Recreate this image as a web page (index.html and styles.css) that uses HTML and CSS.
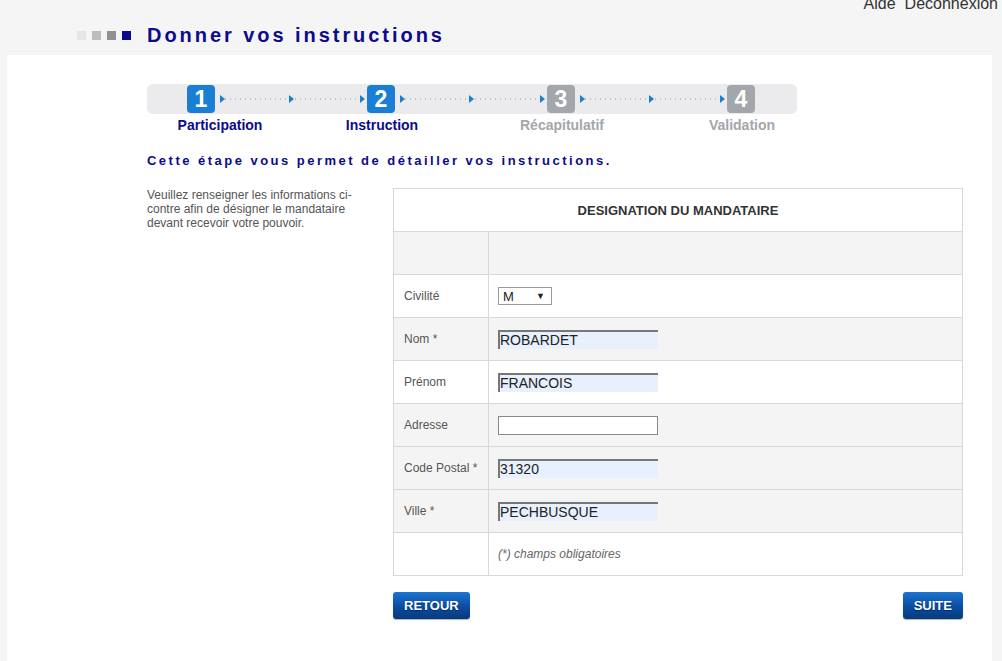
FILE: index.html
```html
<!DOCTYPE html>
<html lang="fr">
<head>
<meta charset="utf-8">
<title>Donner vos instructions</title>
<link rel="stylesheet" href="styles.css">
</head>
<body>
<div class="top">
  <div class="toplinks"><span>Aide</span><span>Déconnexion</span></div>
  <div class="titlebar">
    <div class="squares"><i class="sq s1"></i><i class="sq s2"></i><i class="sq s3"></i><i class="sq s4"></i></div>
    <h1 class="title">Donner vos instructions</h1>
  </div>
</div>
<div class="panel">
  <div class="stepper">
    <div class="step on">1</div>
    <svg class="conn" width="152" height="10" viewBox="0 0 152 10"><line x1="10" y1="5" x2="72" y2="5" stroke="#8a9bb0" stroke-width="1" stroke-dasharray="1 4"/><line x1="80" y1="5" x2="142" y2="5" stroke="#8a9bb0" stroke-width="1" stroke-dasharray="1 4"/><path d="M5 1 L10 5 L5 9Z M74 1 L79 5 L74 9Z M145 1 L150 5 L145 9Z" fill="#1a7fd4"/></svg>
    <div class="step on">2</div>
    <svg class="conn" width="152" height="10" viewBox="0 0 152 10"><line x1="10" y1="5" x2="72" y2="5" stroke="#8a9bb0" stroke-width="1" stroke-dasharray="1 4"/><line x1="80" y1="5" x2="142" y2="5" stroke="#8a9bb0" stroke-width="1" stroke-dasharray="1 4"/><path d="M5 1 L10 5 L5 9Z M74 1 L79 5 L74 9Z M145 1 L150 5 L145 9Z" fill="#1a7fd4"/></svg>
    <div class="step off">3</div>
    <svg class="conn" width="152" height="10" viewBox="0 0 152 10"><line x1="10" y1="5" x2="72" y2="5" stroke="#8a9bb0" stroke-width="1" stroke-dasharray="1 4"/><line x1="80" y1="5" x2="142" y2="5" stroke="#8a9bb0" stroke-width="1" stroke-dasharray="1 4"/><path d="M5 1 L10 5 L5 9Z M74 1 L79 5 L74 9Z M145 1 L150 5 L145 9Z" fill="#1a7fd4"/></svg>
    <div class="step off">4</div>
  </div>
  <div class="steplabels">
    <span class="lbl on first">Participation</span>
    <span class="lbl on">Instruction</span>
    <span class="lbl off">Récapitulatif</span>
    <span class="lbl off">Validation</span>
  </div>
  <h2 class="subtitle">Cette étape vous permet de détailler vos instructions.</h2>
  <div class="content">
    <p class="intro">Veuillez renseigner les informations ci-contre afin de désigner le mandataire devant recevoir votre pouvoir.</p>
    <div class="formcol">
      <table class="form">
        <tr class="head"><th colspan="2">DESIGNATION DU MANDATAIRE</th></tr>
        <tr class="g"><td class="lab"></td><td></td></tr>
        <tr><td class="lab">Civilité</td><td><span class="select">M<span class="caret">▼</span></span></td></tr>
        <tr class="g"><td class="lab">Nom *</td><td><span class="input fill">ROBARDET</span></td></tr>
        <tr><td class="lab">Prénom</td><td><span class="input fill">FRANCOIS</span></td></tr>
        <tr class="g"><td class="lab">Adresse</td><td><span class="input empty"></span></td></tr>
        <tr class="g"><td class="lab">Code Postal *</td><td><span class="input fill">31320</span></td></tr>
        <tr class="g"><td class="lab">Ville *</td><td><span class="input fill">PECHBUSQUE</span></td></tr>
        <tr><td class="lab"></td><td class="note">(*) champs obligatoires</td></tr>
      </table>
      <div class="buttons">
        <span class="btn">RETOUR</span>
        <span class="btn">SUITE</span>
      </div>
    </div>
  </div>
</div>
</body>
</html>
```
FILE: styles.css
```css
html, body {
  margin: 0;
  padding: 0;
}
body {
  background: #f5f5f6;
  font-family: "Liberation Sans", Arial, sans-serif;
  width: 1002px;
  height: 661px;
  overflow: hidden;
}
.top {
  height: 55px;
  position: relative;
}
.toplinks {
  position: absolute;
  right: 4px;
  top: -5px;
  display: flex;
  gap: 9px;
  font-size: 16px;
  color: #333;
}
.titlebar {
  display: flex;
  align-items: center;
  padding-left: 77px;
  padding-top: 24px;
}
.squares {
  display: flex;
  gap: 6px;
  margin-right: 16px;
}
.sq {
  display: block;
  width: 9px;
  height: 9px;
}
.s1 { background: #e6e6e8; }
.s2 { background: #bdbdbf; }
.s3 { background: #909092; }
.s4 { background: #0b0b8a; }
.title {
  margin: 0;
  font-size: 20px;
  font-weight: bold;
  letter-spacing: 2.95px;
  color: #0b0b8c;
  line-height: 22px;
}
.panel {
  background: #fff;
  margin: 0 10px 0 7px;
  height: 606px;
  padding-left: 140px;
  padding-top: 29px;
  box-sizing: border-box;
}
.stepper {
  width: 650px;
  height: 30px;
  background: #ebebed;
  border-radius: 6px;
  display: flex;
  align-items: center;
  padding-left: 40px;
  box-sizing: border-box;
}
.step {
  width: 28px;
  height: 28px;
  border-radius: 4px;
  color: #fff;
  font-weight: bold;
  font-size: 23px;
  line-height: 28px;
  text-align: center;
}
.step.on { background: #1a7fd4; }
.step.off { background: #a3a6ab; }
.conn { display: block; }
.steplabels {
  display: grid;
  grid-template-columns: repeat(4, 180px);
  margin-left: -35px;
  margin-top: 3px;
  height: 16px;
}
.lbl {
  text-align: center;
  font-size: 14px;
  font-weight: bold;
  line-height: 16px;
}
.lbl.first { padding-left: 36px; }
.lbl.on { color: #0b0b8c; }
.lbl.off { color: #a3a6ab; }
.subtitle {
  margin: 20px 0 0 0;
  font-size: 13px;
  font-weight: bold;
  letter-spacing: 2.48px;
  color: #0b0b8c;
  line-height: 16px;
}
.content {
  display: flex;
  margin-top: 19px;
}
.intro {
  margin: 0;
  width: 212px;
  margin-right: 34px;
  font-size: 12px;
  line-height: 14px;
  color: #555;
}
.formcol {
  width: 570px;
}
.form {
  width: 570px;
  border-collapse: collapse;
  border: 1px solid #d8d8da;
}
.form th, .form td {
  height: 42px;
  padding: 0;
  border-top: 1px solid #d8d8da;
  border-bottom: 1px solid #d8d8da;
  font-size: 12px;
}
.form th {
  font-weight: bold;
  font-size: 13px;
  color: #333;
  text-align: center;
  background: #fff;
}
.form td.lab {
  width: 84px;
  padding-left: 10px;
  color: #555;
  border-right: 1px solid #d8d8da;
}
.form td { padding-left: 9px; vertical-align: middle; }
.form tr.g td { background: #f4f4f5; }
.input {
  display: block;
  box-sizing: border-box;
  width: 160px;
  height: 19px;
  font-size: 14px;
  line-height: 16px;
  color: #222;
  padding-left: 0;
}
.input.fill {
  background: #e8f0fe;
  border-top: 2px solid #777;
  border-left: 2px solid #777;
}
.input.empty {
  background: #fff;
  border: 1px solid #888;
}
.select {
  display: inline-flex;
  justify-content: space-between;
  align-items: center;
  box-sizing: border-box;
  width: 54px;
  height: 18px;
  border: 1px solid #999;
  background: #fff;
  font-size: 13px;
  color: #222;
  padding: 0 6px 0 4px;
}
.caret { font-size: 9px; }
.note {
  font-style: italic;
  color: #666;
}
.buttons {
  display: flex;
  justify-content: space-between;
  margin-top: 16px;
}
.btn {
  display: inline-block;
  height: 27px;
  line-height: 27px;
  padding: 0 11px;
  border-radius: 3px;
  background: linear-gradient(#1b74cf, #0a4da0 55%, #063a7c);
  color: #fff;
  font-weight: bold;
  font-size: 13px;
  text-shadow: 0 1px 1px #002a66;
  box-shadow: 0 1px 1px rgba(0,0,0,0.3);
}
```
